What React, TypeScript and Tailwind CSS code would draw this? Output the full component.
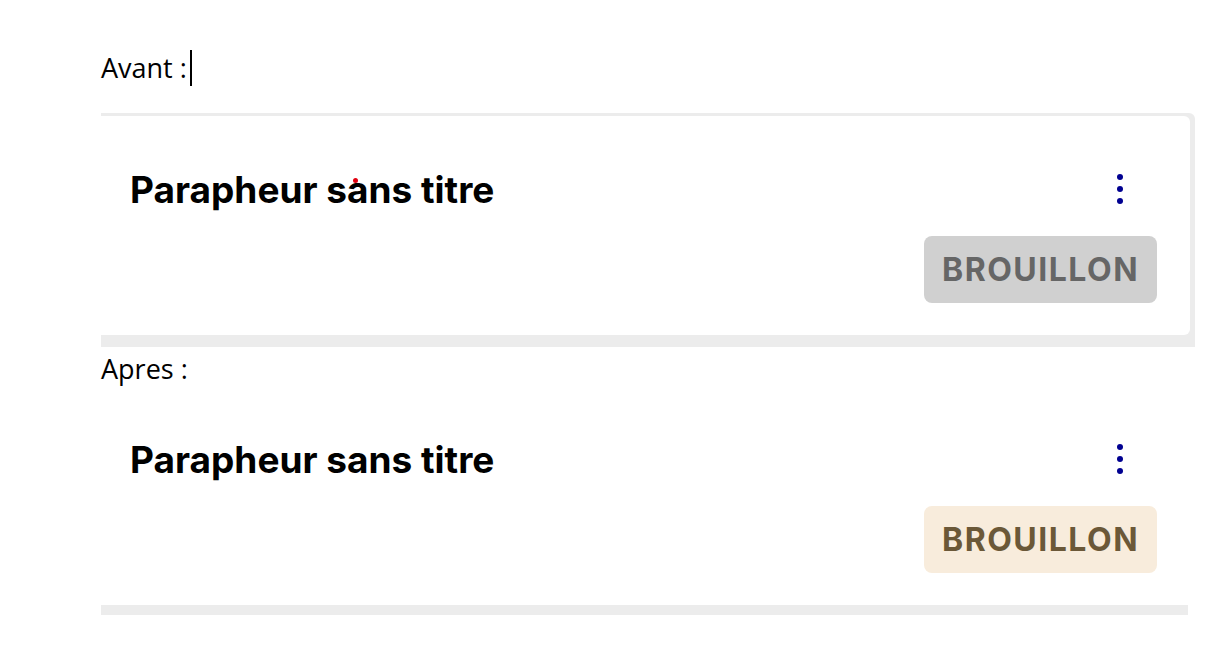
import React from 'react';

const Kebab: React.FC = () => (
  <div className="flex flex-col items-center gap-[6px] mr-[34px]">
    <span className="block w-[6px] h-[6px] rounded-full bg-[#000091]" />
    <span className="block w-[6px] h-[6px] rounded-full bg-[#000091]" />
    <span className="block w-[6px] h-[6px] rounded-full bg-[#000091]" />
  </div>
);

const Card: React.FC<{ badgeClass: string; dot?: boolean }> = ({ badgeClass, dot }) => (
  <div className="h-[219px] bg-white rounded-r-md flex justify-between pl-[29px] pr-[33px] pt-[53px]">
    <h2 className="relative text-[37px] leading-[42px] font-bold text-black h-fit [font-variant-ligatures:none]">
      Parapheur sans titre
      {dot && <span className="absolute left-[223px] top-[9px] w-[5px] h-[5px] rounded-full bg-[#e1000f]" />}
    </h2>
    <div className="flex flex-col items-end">
      <div className="mt-[5px]">
        <Kebab />
      </div>
      <span
        className={`mt-[32px] w-[233px] h-[67px] rounded-lg flex items-center justify-center text-[32px] font-bold tracking-[1.5px] ${badgeClass}`}
      >
        BROUILLON
      </span>
    </div>
  </div>
);

export default function App() {
  return (
    <div className="min-h-[658px] bg-white pl-[101px] font-['Inter',sans-serif]">
      <div className="pt-[50px] h-[113px]">
        <p className="font-['Open_Sans',sans-serif] text-[27px] leading-[36px] text-black flex items-center">
          Avant :<span className="ml-[3px] inline-block w-[2px] h-[36px] bg-black" />
        </p>
      </div>
      <div className="w-[1094px] bg-[#ececec] pt-[3px] pr-[5px] pb-[12px] rounded-tr-md">
        <Card badgeClass="bg-[#d0d0d0] text-[#666666]" dot />
      </div>
      <div className="h-[39px] pt-[4px]">
        <p className="font-['Open_Sans',sans-serif] text-[27px] leading-[36px] text-black">Apres :</p>
      </div>
      <div className="w-[1089px]">
        <Card badgeClass="bg-[#f8ecdc] text-[#6b5838]" />
      </div>
      <div className="w-[1087px] h-[10px] bg-[#ececec]" />
    </div>
  );
}
